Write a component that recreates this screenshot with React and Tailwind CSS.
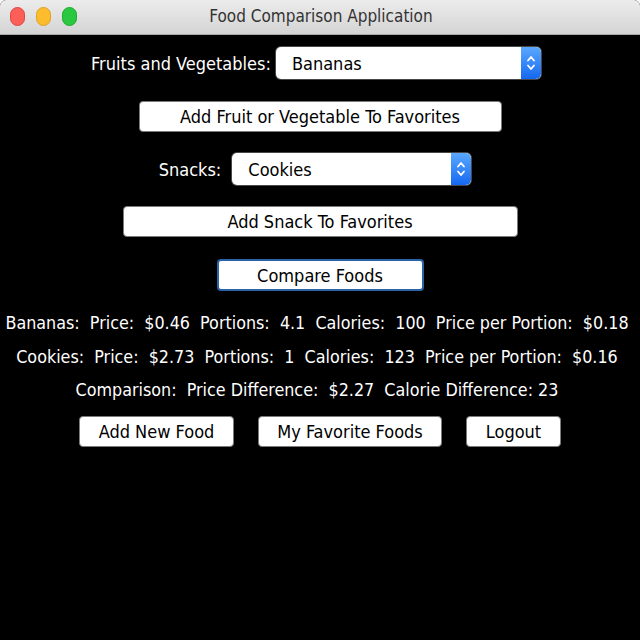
import React from 'react';

const font = { fontFamily: '"DejaVu Sans Condensed", "DejaVu Sans", sans-serif' };

const Chevrons = () => (
  <svg width="10" height="18" viewBox="0 0 10 18" fill="none" stroke="white" strokeWidth="1.8" strokeLinecap="round" strokeLinejoin="round">
    <path d="M2 6.5 L5 3 L8 6.5" />
    <path d="M2 11.5 L5 15 L8 11.5" />
  </svg>
);

const Combo = ({ value, width }) => (
  <div className={`flex h-[32px] ${width} rounded-[5px] bg-white overflow-hidden shadow-[0_0_0_1px_rgba(120,120,120,0.6)]`}>
    <div className="flex-1 flex items-center pl-[16px] text-black text-[18px]">{value}</div>
    <div className="w-[20px] flex items-center justify-center bg-gradient-to-b from-[#5aa8ff] to-[#1467f0] rounded-r-[5px]">
      <Chevrons />
    </div>
  </div>
);

const Button = ({ children, width, focused }) => (
  <button
    className={`${width} rounded-[4px] bg-white text-black text-[18px] flex items-center justify-center ${
      focused
        ? 'h-[32px] border-2 border-[#2a63a8]'
        : 'h-[31px] border border-[#7a7a7a]'
    }`}
  >
    {children}
  </button>
);

export default function App() {
  const lines = [
    'Bananas:  Price:  $0.46  Portions:  4.1  Calories:  100  Price per Portion:  $0.18',
    'Cookies:  Price:  $2.73  Portions:  1  Calories:  123  Price per Portion:  $0.16',
    'Comparison:  Price Difference:  $2.27  Calorie Difference: 23',
  ];

  return (
    <div className="w-[640px] h-[640px] bg-white" style={font}>
      <div className="w-full h-full rounded-t-[6px] overflow-hidden bg-black flex flex-col">
        {/* title bar */}
        <div className="relative h-[35px] shrink-0 bg-gradient-to-b from-[#ececec] to-[#d4d4d4] border-b border-[#a9a9a9] flex items-center justify-center">
          <div className="absolute left-[10px] top-[7px] flex gap-[11px]">
            <span className="w-[15px] h-[19px] rounded-full bg-[#fc5f57] border border-[#e0443e]" />
            <span className="w-[15px] h-[19px] rounded-full bg-[#fdbc2e] border border-[#dea123]" />
            <span className="w-[15px] h-[19px] rounded-full bg-[#29c840] border border-[#1aab29]" />
          </div>
          <span className="text-[#333] text-[17px] pl-[2px]">Food Comparison Application</span>
        </div>

        <div className="flex flex-col items-center pt-[12px] text-white">
          <div className="flex items-center gap-[5px] h-[32px] -ml-[8px]">
            <span className="text-[18px]">Fruits and Vegetables:</span>
            <Combo value="Bananas" width="w-[265px]" />
          </div>

          <div className="mt-[22px]">
            <Button width="w-[363px]">Add Fruit or Vegetable To Favorites</Button>
          </div>

          <div className="flex items-center gap-[11px] h-[32px] mt-[21px] -ml-[10px]">
            <span className="text-[18px]">Snacks:</span>
            <Combo value="Cookies" width="w-[239px]" />
          </div>

          <div className="mt-[21px]">
            <Button width="w-[395px]">Add Snack To Favorites</Button>
          </div>

          <div className="mt-[22px]">
            <Button width="w-[207px]" focused>Compare Foods</Button>
          </div>

          <div className="mt-[16px] -ml-[6px] flex flex-col items-center">
            {lines.map((l, i) => (
              <div key={i} className="h-[33.5px] flex items-center whitespace-pre text-[17.75px]">{l}</div>
            ))}
          </div>

          <div className="mt-[8px] flex gap-[24px]">
            <Button width="w-[155px]">Add New Food</Button>
            <Button width="w-[184px]">My Favorite Foods</Button>
            <Button width="w-[95px]">Logout</Button>
          </div>
        </div>
      </div>
    </div>
  );
}
